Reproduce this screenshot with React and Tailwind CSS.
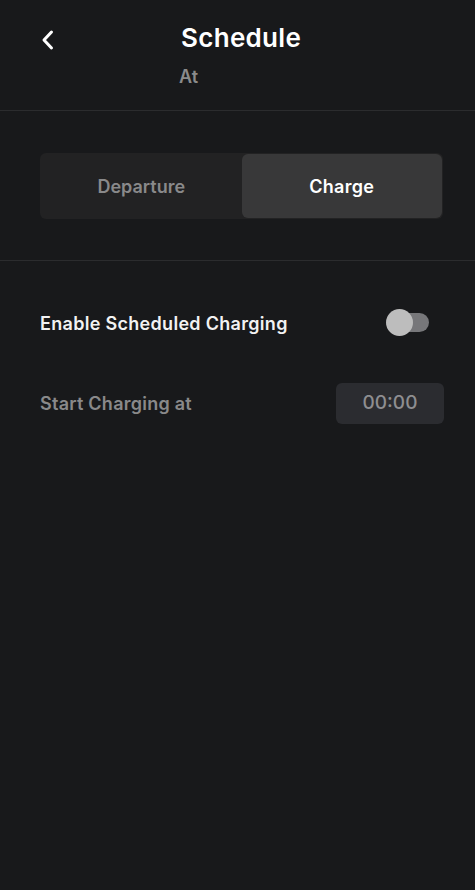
export default function App() {
  return (
    <div className="min-h-screen w-full bg-[#18191b] text-white" style={{ fontFamily: 'Inter, "Noto Sans", sans-serif' }}>
      <header className="h-[111px] border-b border-[#2b2c2e] flex">
        <button className="w-[96px] h-[80px] flex items-start pt-[29px] pl-[40px] text-white">
          <svg width="16" height="22" viewBox="0 0 16 22" fill="none" stroke="currentColor" strokeWidth="3" strokeLinecap="round" strokeLinejoin="round">
            <path d="M11.5 3 L4 11 L11.5 19" />
          </svg>
        </button>
        <div className="pl-[85px] pt-[21px] flex flex-col">
          <h1 className="text-[26px] leading-[34px] font-semibold tracking-[0.3px]">Schedule</h1>
          <p className="mt-[11px] text-[18px] leading-[22px] font-semibold text-[#8a8a8b] -ml-[2px]">At</p>
        </div>
      </header>

      <section className="h-[150px] border-b border-[#2b2c2e] px-[40px] pt-[42px]">
        <div className="h-[66px] w-[403px] rounded-[6px] bg-[#222223] flex p-[1px]">
          <button className="flex-1 rounded-[6px] text-[18px] font-semibold text-[#89898a]">Departure</button>
          <button className="flex-1 rounded-[6px] bg-[#383839] text-[18px] font-semibold text-white tracking-[0.3px]">Charge</button>
        </div>
      </section>

      <section className="pl-[40px] pr-[31px] pt-[44px]">
        <div className="flex items-center justify-between h-[36px]">
          <span className="text-[18px] font-semibold text-[#f2f2f2] tracking-[0.3px]">Enable Scheduled Charging</span>
          <div className="relative w-[43px] h-[28px] mr-[15px]">
            <div className="absolute left-[12px] right-0 top-[4px] h-[19px] rounded-full bg-[#77777a]" />
            <div className="absolute left-0 top-0 w-[27px] h-[27px] rounded-full bg-[#bdbdbd]" />
          </div>
        </div>
        <div className="flex items-center justify-between mt-[42px]">
          <span className="text-[18px] font-semibold text-[#89898a] tracking-[0.25px]">Start Charging at</span>
          <div className="w-[108px] h-[41px] rounded-[6px] bg-[#2b2c30] flex items-center justify-center text-[19px] font-medium text-[#8e8e90]">
            00:00
          </div>
        </div>
      </section>
    </div>
  )
}
